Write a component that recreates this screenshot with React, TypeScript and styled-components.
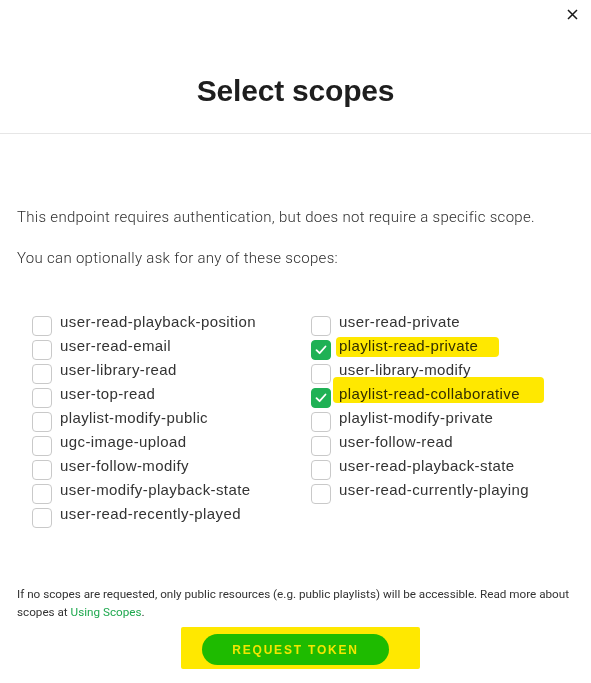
import React from 'react';
import styled, { createGlobalStyle } from 'styled-components';

const scopesLeft = [
  'user-read-playback-position',
  'user-read-email',
  'user-library-read',
  'user-top-read',
  'playlist-modify-public',
  'ugc-image-upload',
  'user-follow-modify',
  'user-modify-playback-state',
  'user-read-recently-played',
];

const scopesRight = [
  'user-read-private',
  'playlist-read-private',
  'user-library-modify',
  'playlist-read-collaborative',
  'playlist-modify-private',
  'user-follow-read',
  'user-read-playback-state',
  'user-read-currently-playing',
];

// marker strokes someone drew over the screenshot
const marks: Record<string, { left: number; width: number; top: number; height: number }> = {
  'playlist-read-private': { left: 25, width: 163, top: 3, height: 20 },
  'playlist-read-collaborative': { left: 22, width: 211, top: -5, height: 26 },
};

const checked = ['playlist-read-private', 'playlist-read-collaborative'];

const App = () => {
  const renderColumn = (list: string[]) =>
    list.map((scope) => {
      const mark = marks[scope];
      return (
        <Row key={scope}>
          <Box $checked={checked.includes(scope)}>
            {checked.includes(scope) && (
              <svg width="12" height="10" viewBox="0 0 12 10">
                <path d="M1.5 5.2 L4.6 8.2 L10.5 1.5" fill="none" stroke="#fff" strokeWidth="1.8" strokeLinecap="round" strokeLinejoin="round" />
              </svg>
            )}
          </Box>
          <Label>{scope}</Label>
          {mark && (
            <Mark
              style={{ left: mark.left, width: mark.width, top: mark.top, height: mark.height }}
            />
          )}
        </Row>
      );
    });

  return (
    <Modal>
      <GlobalStyle />
      <Header>
        <CloseRow>
          <CloseButton aria-label="close">
            <svg width="11" height="11" viewBox="0 0 11 11">
              <path d="M1 1 L10 10 M10 1 L1 10" stroke="#181818" strokeWidth="1.5" />
            </svg>
          </CloseButton>
        </CloseRow>
        <Title>Select scopes</Title>
      </Header>
      <Body>
        <Text>This endpoint requires authentication, but does not require a specific scope.</Text>
        <Text $gap={19}>You can optionally ask for any of these scopes:</Text>
        <ScopeGrid>
          <Column>{renderColumn(scopesLeft)}</Column>
          <Column>{renderColumn(scopesRight)}</Column>
        </ScopeGrid>
        <Footnote>
          If no scopes are requested, only public resources (e.g. public playlists) will be
          accessible. Read more about scopes at <Link href="#">Using Scopes</Link>.
        </Footnote>
        <ButtonRow>
          <ButtonMark>
            <RequestButton>Request token</RequestButton>
          </ButtonMark>
        </ButtonRow>
      </Body>
    </Modal>
  );
};

const GlobalStyle = createGlobalStyle`
  body {
    margin: 0;
    background: #fff;
    font-family: Roboto, "Liberation Sans", sans-serif;
  }
`;

const Modal = styled.div`
  width: 591px;
  height: 683px;
  background: #fff;
  overflow: hidden;
`;

const Header = styled.div`
  height: 133px;
  border-bottom: 1px solid #e6e6e6;
  display: flex;
  flex-direction: column;
`;

const CloseRow = styled.div`
  display: flex;
  justify-content: flex-end;
  padding: 9px 13px 0 0;
  height: 11px;
`;

const CloseButton = styled.button`
  display: flex;
  width: 11px;
  height: 11px;
  padding: 0;
  border: none;
  background: none;
`;

const Title = styled.h1`
  margin: 53px 0 0;
  text-align: center;
  font-family: "Liberation Sans", Arial, sans-serif;
  font-weight: 700;
  font-size: 30px;
  line-height: 36px;
  color: #1e1e1e;
  letter-spacing: -0.2px;
`;

const Body = styled.div`
  padding: 72px 17px 0;
`;

const Text = styled.p<{ $gap?: number }>`
  margin: ${(p) => p.$gap ?? 0}px 0 0;
  font-family: Roboto, "Liberation Sans", sans-serif;
  font-size: 15px;
  font-weight: 300;
  letter-spacing: 0.3px;
  line-height: 22px;
  color: #2e2e2e;
`;

const ScopeGrid = styled.div`
  display: grid;
  grid-template-columns: 279px 1fr;
  margin: 41px 0 0 15px;
`;

const Column = styled.div`
  display: flex;
  flex-direction: column;
`;

const Row = styled.div`
  position: relative;
  display: flex;
  align-items: center;
  gap: 8px;
  height: 24px;
`;

const Box = styled.span<{ $checked?: boolean }>`
  display: flex;
  align-items: center;
  justify-content: center;
  box-sizing: border-box;
  width: 20px;
  height: 20px;
  margin-top: 8px;
  border-radius: 4px;
  border: 1px solid ${(p) => (p.$checked ? '#1fb155' : '#c9c9c9')};
  background: ${(p) => (p.$checked ? '#1fb155' : '#fff')};
  flex-shrink: 0;
`;

const Label = styled.span`
  font-family: "Liberation Sans", Arial, sans-serif;
  font-size: 15px;
  line-height: 24px;
  color: #333;
  letter-spacing: 0.4px;
`;

const Mark = styled.span`
  position: absolute;
  background: #ffe800;
  border-radius: 4px;
  mix-blend-mode: multiply;
  pointer-events: none;
`;

const Footnote = styled.p`
  margin: 59px 0 0;
  font-family: Roboto, "Liberation Sans", sans-serif;
  font-size: 11.7px;
  line-height: 18px;
  color: #333;
`;

const Link = styled.a`
  color: #1ea84e;
  text-decoration: none;
`;

const ButtonRow = styled.div`
  display: flex;
  justify-content: center;
  margin-top: 6px;
`;

const ButtonMark = styled.div`
  background: #ffe800;
  padding: 7px 31px 4px 21px;
  margin-left: 10px;
  border-radius: 2px;
`;

const RequestButton = styled.button`
  display: block;
  width: 187px;
  height: 31px;
  border: none;
  border-radius: 16px;
  background: #1ebb00;
  color: #f3e600;
  font-family: "Liberation Sans", Arial, sans-serif;
  font-weight: 700;
  font-size: 12px;
  letter-spacing: 1.8px;
  text-transform: uppercase;
`;

export default App;
